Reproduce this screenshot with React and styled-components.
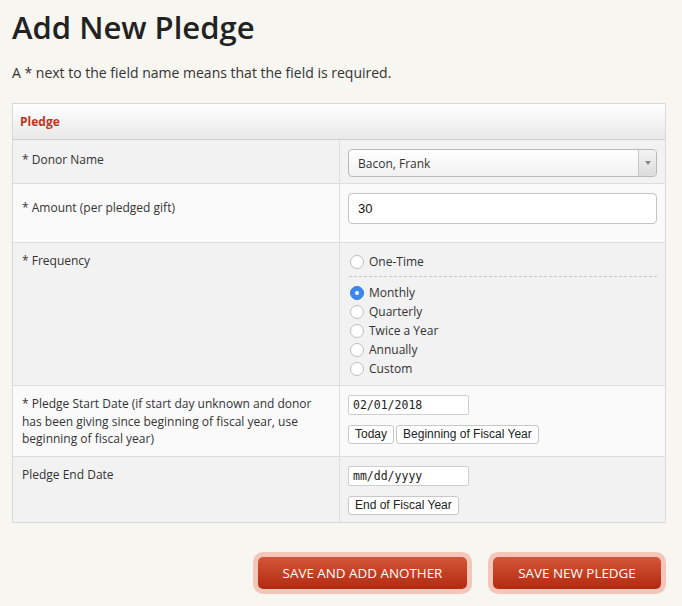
import React, { useState } from 'react';
import styled, { createGlobalStyle } from 'styled-components';

const GlobalStyle = createGlobalStyle`
  body {
    margin: 0;
    background: #f7f6f0;
    font-family: "Open Sans", "DejaVu Sans", sans-serif;
    color: #333;
  }
`;

const Page = styled.div`
  padding: 7px 16px 10px 12px;
`;

const Title = styled.h1`
  margin: 0;
  font-size: 31px;
  font-weight: 600;
  color: #222;
  line-height: 40px;
`;

const Note = styled.p`
  margin: 16px 0 20px;
  font-size: 14px;
  line-height: 20px;
  color: #333;
`;

const Table = styled.div`
  border: 1px solid #d9d9d9;
  background: #fff;
`;

const Header = styled.div`
  height: 35px;
  display: flex;
  align-items: center;
  padding-left: 7px;
  background: linear-gradient(#ffffff, #e9e9e9);
  border-bottom: 1px solid #cfcfcf;
  color: #c2331b;
  font-weight: 700;
  font-size: 12px;
`;

const Row = styled.div`
  display: grid;
  grid-template-columns: 327px 1fr;
  min-height: ${p => p.$h}px;
  background: ${p => (p.$alt ? '#f2f2f2' : '#fafafa')};
  border-top: ${p => (p.$first ? 'none' : '1px solid #dedede')};
`;

const Label = styled.div`
  padding: ${p => p.$top || 12}px 10px 8px 9px;
  font-size: 12px;
  line-height: 17.5px;
  color: #333;
  border-right: 1px solid #dedede;
`;

const Field = styled.div`
  padding: ${p => p.$pad || '9px 8px 7px 8px'};
  display: flex;
  flex-direction: column;
  align-items: flex-start;
`;

const SelectBox = styled.div`
  position: relative;
  box-sizing: border-box;
  width: 100%;
  height: 28px;
  border: 1px solid #b8b8b8;
  border-radius: 4px;
  background: linear-gradient(#ffffff, #f1f1f1);
  display: flex;
  align-items: center;
  padding-left: 9px;
  font-size: 12px;
  color: #333;
`;

const Caret = styled.div`
  position: absolute;
  right: 0;
  top: 0;
  bottom: 0;
  width: 17px;
  border-left: 1px solid #c8c8c8;
  background: linear-gradient(#f4f4f4, #dcdcdc);
  border-radius: 0 3px 3px 0;
  display: flex;
  align-items: center;
  justify-content: center;
  &::after {
    content: '';
    border-left: 3px solid transparent;
    border-right: 3px solid transparent;
    border-top: 4px solid #888;
  }
`;

const TextInput = styled.input`
  box-sizing: border-box;
  width: 100%;
  height: 31px;
  border: 1px solid #c4c4c4;
  border-radius: 4px;
  background: #fff;
  padding: 0 9px;
  font-family: "Liberation Sans", Arial, sans-serif;
  font-size: 13px;
  color: #111;
  outline: none;
`;

const RadioList = styled.div`
  display: flex;
  flex-direction: column;
  width: 100%;
`;

const Divider = styled.div`
  width: 100%;
  border-top: 1px dashed #c8c8c8;
  margin: 5px 0 6px;
`;

const RadioRow = styled.label`
  display: flex;
  align-items: center;
  height: 19px;
  font-size: 12px;
  color: #333;
  cursor: pointer;
`;

const Circle = styled.span`
  box-sizing: border-box;
  width: 14px;
  height: 14px;
  border-radius: 50%;
  margin: 0 5px 0 1px;
  display: inline-flex;
  align-items: center;
  justify-content: center;
  background: ${p => (p.$on ? '#3a87f0' : '#fff')};
  border: 1px solid ${p => (p.$on ? '#2f7ae6' : '#bdbdbd')};
  &::after {
    content: '';
    display: ${p => (p.$on ? 'block' : 'none')};
    width: 4px;
    height: 4px;
    border-radius: 50%;
    background: #fff;
  }
`;

const DateInput = styled.input`
  box-sizing: border-box;
  width: 121px;
  height: 20px;
  border: 1px solid #cfcfcf;
  border-radius: 2px;
  background: #fff;
  padding: 0 4px;
  font-family: "DejaVu Sans Mono", "Liberation Mono", monospace;
  font-size: 11.5px;
  color: #222;
  outline: none;
  &::placeholder {
    color: #222;
  }
`;

const ButtonRow = styled.div`
  display: flex;
  gap: 2px;
  margin-top: 10px;
`;

const SmallButton = styled.button`
  height: 19px;
  padding: 0 6px;
  border: 1px solid #c8c8c8;
  border-radius: 3px;
  background: #fff;
  font-family: "Liberation Sans", Arial, sans-serif;
  font-size: 12px;
  color: #222;
  line-height: 17px;
  cursor: pointer;
`;

const Actions = styled.div`
  display: flex;
  justify-content: flex-end;
  gap: 16px;
  margin-top: 29px;
`;

const SaveButton = styled.button`
  box-sizing: content-box;
  width: ${p => p.$w}px;
  height: 32px;
  padding: 0;
  border: none;
  border-radius: 5px;
  background: linear-gradient(#d4563a, #b3290f);
  box-shadow: 0 0 0 5px #f4c6ba;
  color: #fff;
  font-family: "Open Sans", sans-serif;
  font-size: 13.4px;
  margin: 5px;
  cursor: pointer;
`;

const frequencies = ['Monthly', 'Quarterly', 'Twice a Year', 'Annually', 'Custom'];

export default function App() {
  const [freq, setFreq] = useState('Monthly');

  return (
    <Page>
      <GlobalStyle />
      <Title>Add New Pledge</Title>
      <Note>A * next to the field name means that the field is required.</Note>
      <Table>
        <Header>Pledge</Header>
        <Row $alt $first $h={43}>
          <Label $top={11}>* Donor Name</Label>
          <Field $pad="9px 8px 6px 8px">
            <SelectBox>
              Bacon, Frank
              <Caret />
            </SelectBox>
          </Field>
        </Row>
        <Row $h={58}>
          <Label $top={15}>* Amount (per pledged gift)</Label>
          <Field>
            <TextInput defaultValue="30" />
          </Field>
        </Row>
        <Row $alt $h={141}>
          <Label $top={9}>* Frequency</Label>
          <Field $pad="9px 8px 7px 9px">
            <RadioList>
              <RadioRow onClick={() => setFreq('One-Time')}>
                <Circle $on={freq === 'One-Time'} />
                One-Time
              </RadioRow>
              <Divider />
              {frequencies.map(f => (
                <RadioRow key={f} onClick={() => setFreq(f)}>
                  <Circle $on={freq === f} />
                  {f}
                </RadioRow>
              ))}
            </RadioList>
          </Field>
        </Row>
        <Row $h={70}>
          <Label $top={9}>
            * Pledge Start Date (if start day unknown and donor has been giving since beginning of fiscal year, use beginning of fiscal year)
          </Label>
          <Field>
            <DateInput defaultValue="02/01/2018" />
            <ButtonRow>
              <SmallButton>Today</SmallButton>
              <SmallButton>Beginning of Fiscal Year</SmallButton>
            </ButtonRow>
          </Field>
        </Row>
        <Row $alt $h={65}>
          <Label $top={9}>Pledge End Date</Label>
          <Field>
            <DateInput placeholder="mm/dd/yyyy" />
            <ButtonRow>
              <SmallButton>End of Fiscal Year</SmallButton>
            </ButtonRow>
          </Field>
        </Row>
      </Table>
      <Actions>
        <SaveButton $w={209}>SAVE AND ADD ANOTHER</SaveButton>
        <SaveButton $w={168}>SAVE NEW PLEDGE</SaveButton>
      </Actions>
    </Page>
  );
}
